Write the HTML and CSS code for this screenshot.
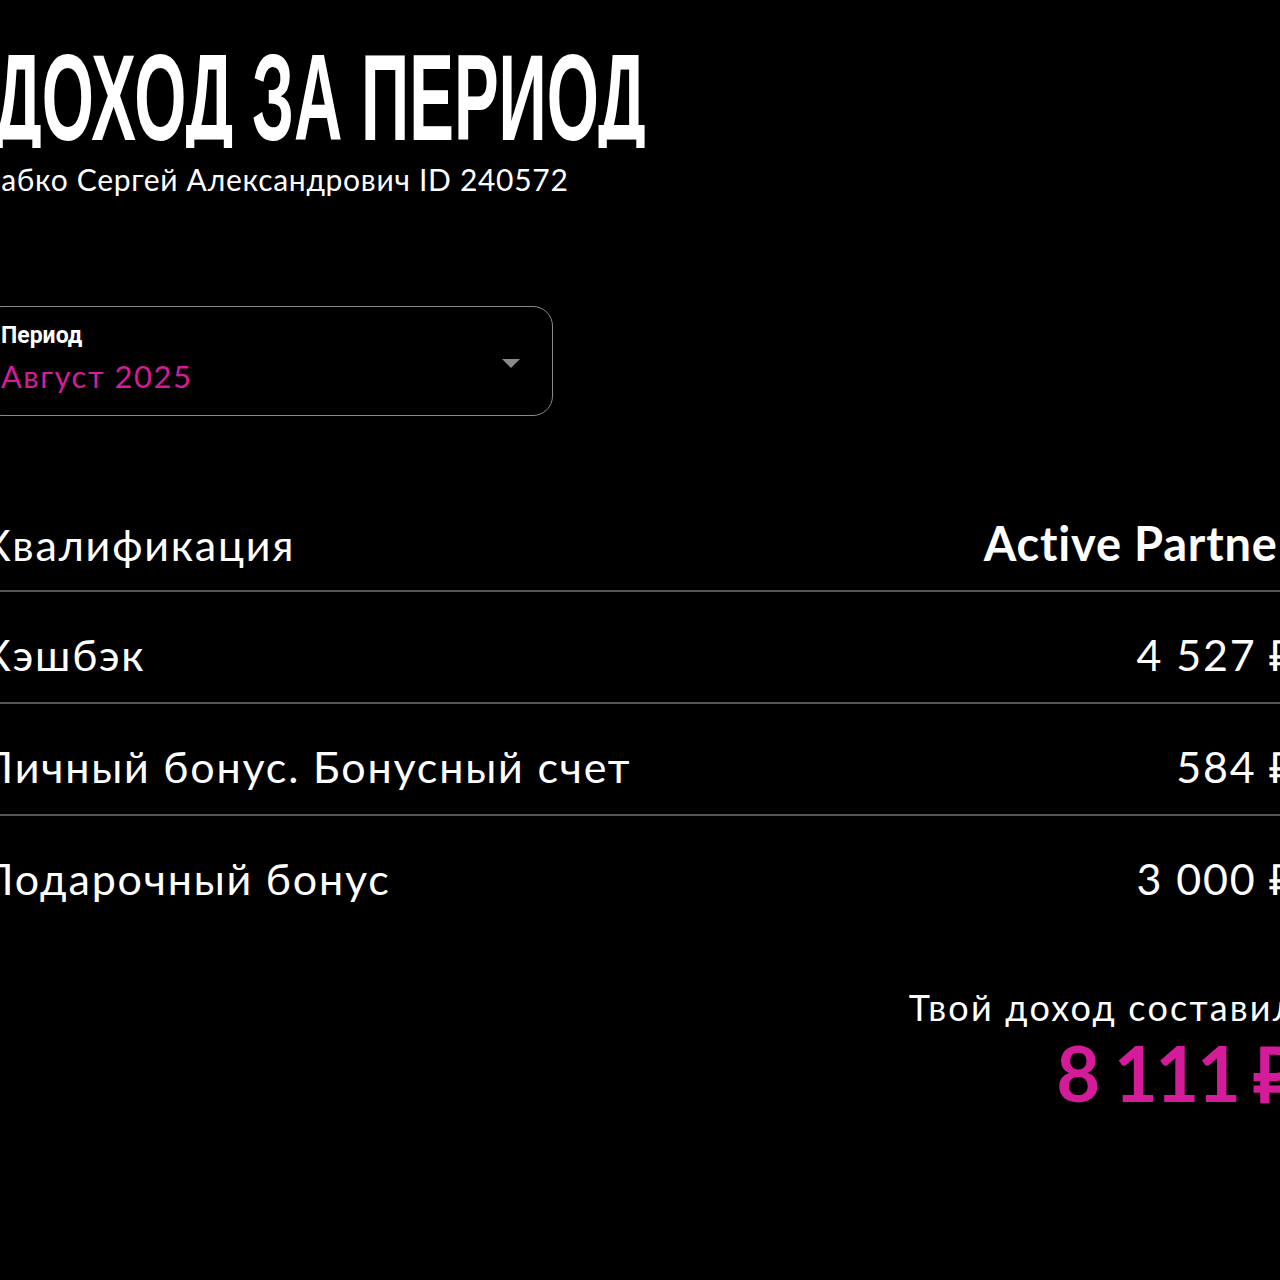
FILE: index.html
```html
<!DOCTYPE html>
<html lang="ru">
<head>
  <meta charset="UTF-8">
  <title>Доход за период</title>
  <meta name="viewport" content="width=device-width, initial-scale=1.0">
  <link rel="stylesheet" href="styles.css">
</head>
<body>
  <div class="page">
    <h1 class="title"><span>ДОХОД ЗА ПЕРИОД</span></h1>
    <p class="subtitle">Бабко Сергей Александрович ID 240572</p>

    <div class="period-select">
      <div class="period-text">
        <div class="period-label">Период</div>
        <div class="period-value">Август 2025</div>
      </div>
      <span class="arrow"></span>
    </div>

    <div class="rows">
      <div class="row">
        <span class="row-name">Квалификация</span>
        <span class="row-value bold">Active Partner</span>
      </div>
      <div class="row">
        <span class="row-name">Кэшбэк</span>
        <span class="row-value">4 527 ₽</span>
      </div>
      <div class="row">
        <span class="row-name">Личный бонус. Бонусный счет</span>
        <span class="row-value">584 ₽</span>
      </div>
      <div class="row last">
        <span class="row-name">Подарочный бонус</span>
        <span class="row-value">3 000 ₽</span>
      </div>
    </div>

    <div class="total">
      <div class="total-label">Твой доход составил</div>
      <div class="total-sum">8 111 ₽</div>
    </div>
  </div>
</body>
</html>
```

FILE: styles.css
```css
body {
  margin: 0;
  background: #000;
  color: #fff;
  font-family: Lato, 'Open Sans', sans-serif;
  overflow: hidden;
}
.page {
  margin-left: -18px;
  width: 1314px;
  padding-top: 36px;
}
.title {
  margin: 0;
  height: 112px;
  overflow: hidden;
  font-family: 'Liberation Sans', sans-serif;
  font-weight: 700;
  font-size: 123px;
  line-height: 1;
  white-space: nowrap;
}
.title span {
  display: inline-block;
  transform: scaleX(0.545);
  transform-origin: left center;
  margin-left: 12px;
}
.subtitle {
  margin: 13px 0 0 0;
  font-size: 30px;
  line-height: 36px;
  letter-spacing: 0.7px;
}
.period-select {
  margin-top: 109px;
  width: 571px;
  height: 110px;
  box-sizing: border-box;
  border: 1px solid #8a8a8a;
  border-radius: 20px;
  padding: 16px 32px 0 18px;
  display: flex;
  justify-content: space-between;
}
.period-text {
  display: flex;
  flex-direction: column;
  gap: 9px;
}
.period-label {
  font-family: Roboto, sans-serif;
  font-weight: 700;
  font-size: 23px;
  line-height: 26px;
}
.period-value {
  color: #d41c9a;
  font-size: 31px;
  line-height: 36px;
  letter-spacing: 1.5px;
}
.arrow {
  align-self: center;
  width: 0;
  height: 0;
  border-left: 9px solid transparent;
  border-right: 9px solid transparent;
  border-top: 9px solid #8a8a8a;
  margin-bottom: 12px;
}
.rows {
  margin-top: 64px;
}
.row {
  height: 112px;
  box-sizing: border-box;
  padding-top: 35px;
  border-bottom: 2px solid #555;
  display: flex;
  justify-content: space-between;
  align-items: baseline;
  font-size: 43px;
  line-height: 56px;
  letter-spacing: 1.8px;
}
.row.last {
  border-bottom: none;
}
.bold {
  font-weight: 700;
  font-size: 47px;
  letter-spacing: 0.8px;
}
.total {
  margin-top: 57px;
  text-align: right;
}
.total-label {
  font-size: 36px;
  line-height: 44px;
  letter-spacing: 2.2px;
}
.total-sum {
  color: #d41c9a;
  font-weight: 700;
  font-size: 76px;
  line-height: 88px;
  letter-spacing: -2.5px;
}
```
